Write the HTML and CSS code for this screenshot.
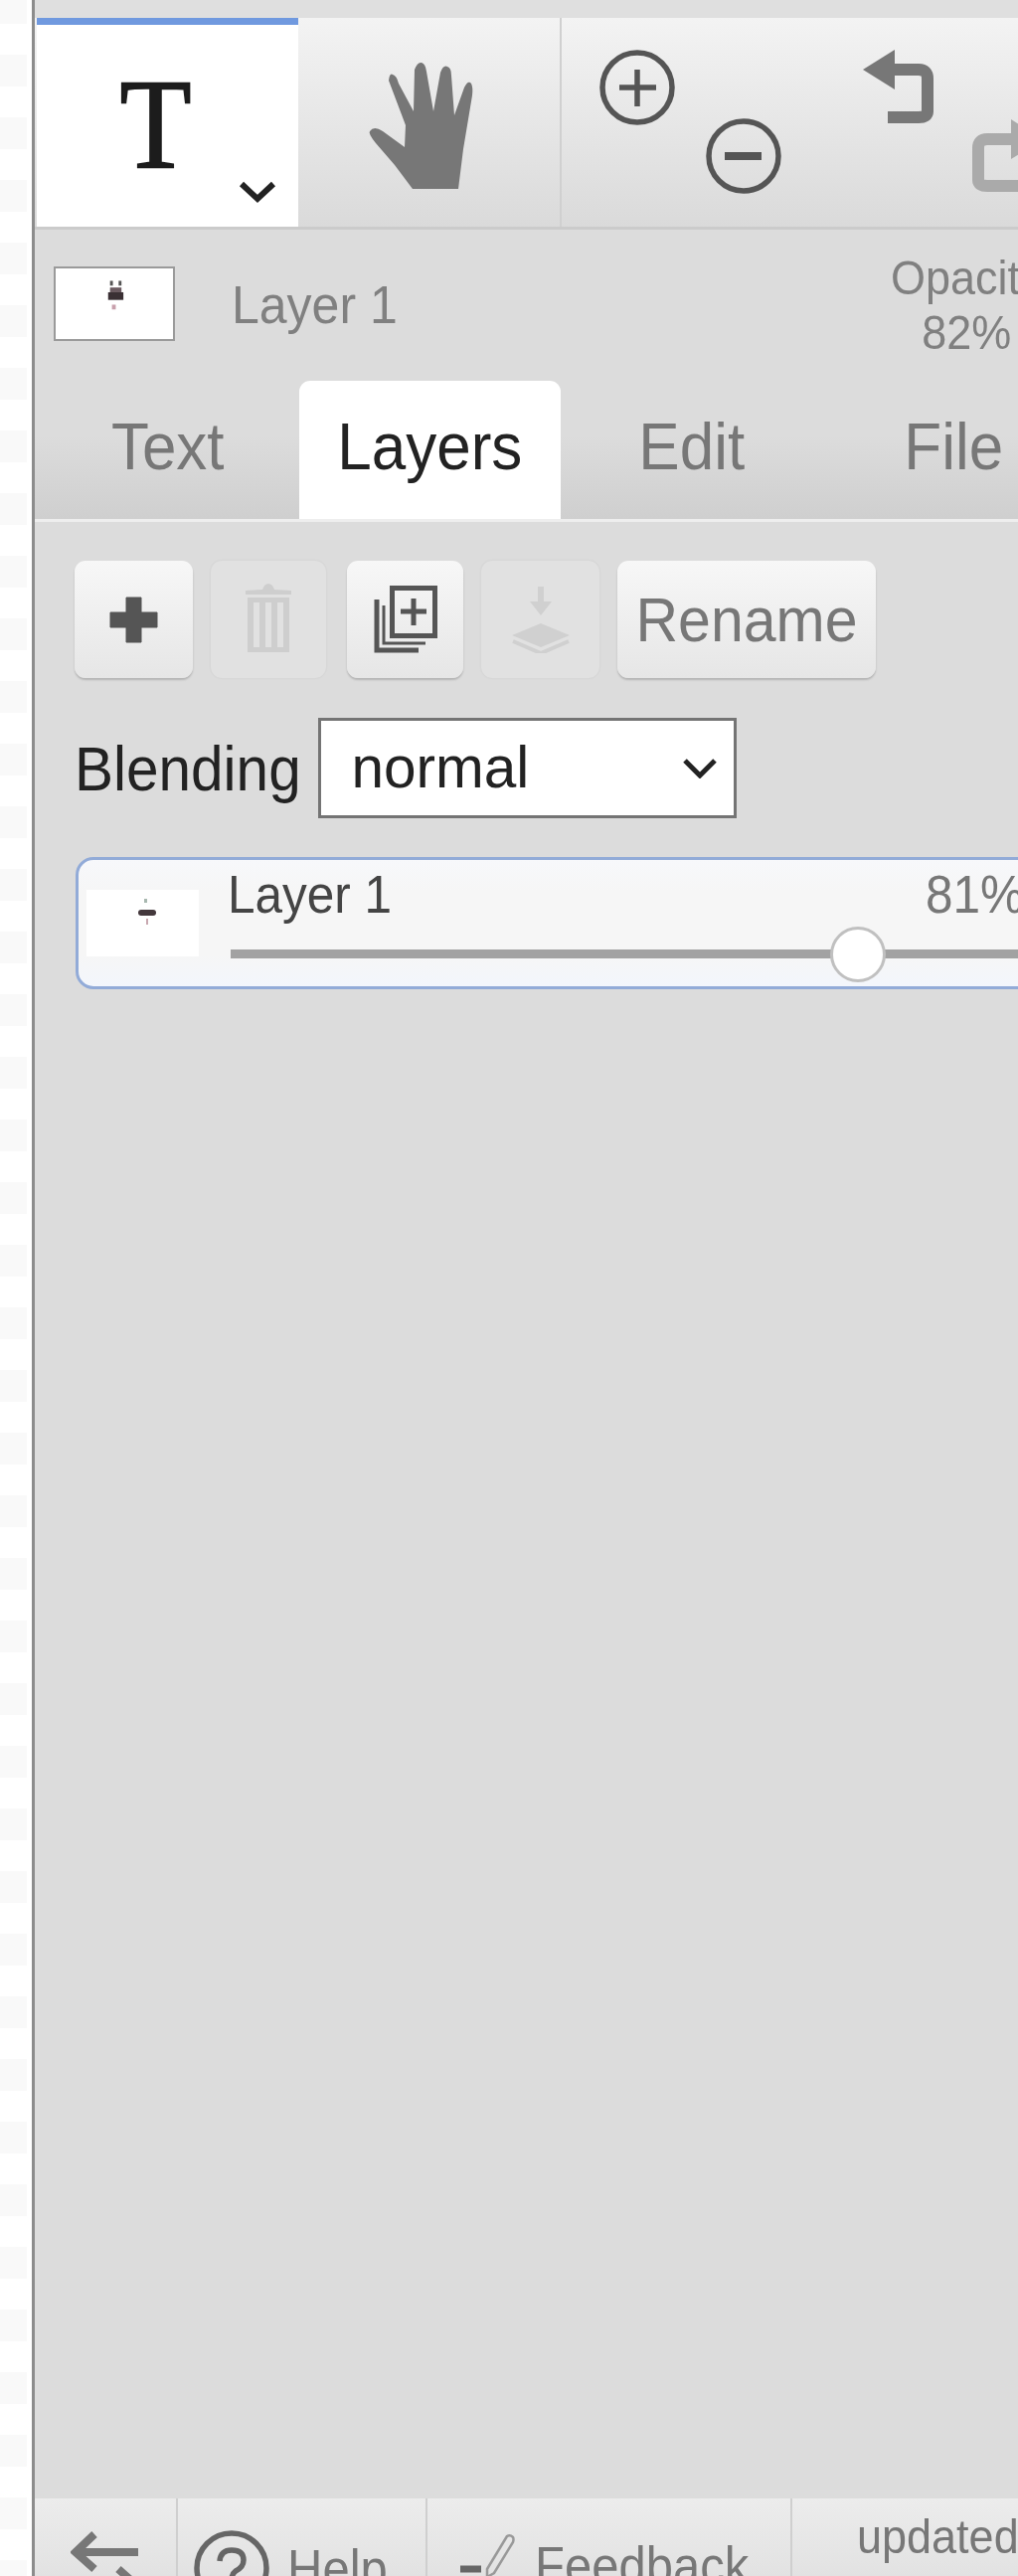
FILE: index.html
```html
<!DOCTYPE html>
<html lang="en">
<head>
<meta charset="utf-8">
<title>Layers</title>
<link rel="stylesheet" href="styles.css">
</head>
<body>
<div class="app">
  <div class="strip"></div>
  <main class="panel">
    <div class="topgap"></div>
    <div class="toolbar">
      <div class="tool tool-active">
        <span class="t-glyph">T</span>
        <svg class="t-chevron" viewBox="0 0 38 24"><path d="M3 4 L19 19 L35 4" fill="none" stroke="#222" stroke-width="6"/></svg>
      </div>
      <div class="tool tool-sep">
        <svg class="tool-svg" viewBox="0 0 263 210"><path fill="#777" d="M115 172 L97 148 L78 126 Q70 116 72 114 Q76 108 85 114 L107 130 L108 108 L91 63 Q92 55 95 57 Q99 58 101 66 L116 94 L117 52 Q120 44 124 45 Q128 46 129 54 L136 94 L143 55 Q146 47 150 49 Q154 50 154 58 L157 98 L167 70 Q171 62 174 66 Q176 70 175 78 L166 132 L161 172 Z"/></svg>
      </div>
      <div class="tool">
        <svg class="tool-svg" viewBox="0 0 263 210"><g fill="none" stroke="#555" stroke-width="5.5"><circle cx="76" cy="70" r="35"/><path d="M58 70H95M76 52V89"/><circle cx="183" cy="139" r="35"/></g><path d="M164 139H201" stroke="#555" stroke-width="8" fill="none"/></svg>
      </div>
      <div class="tool">
        <svg class="tool-svg" viewBox="0 0 263 210"><path d="M65 52H96Q105 52 105 61V94Q105 100 96 100H65" fill="none" stroke="#777" stroke-width="12"/><path d="M40 52L72 32V72Z" fill="#777"/><path d="M195 122H165Q156 122 156 131V163Q156 169 165 169H230" fill="none" stroke="#aaa" stroke-width="12"/><path d="M221 122L189 102V142Z" fill="#aaa"/></svg>
      </div>
    </div>
    <div class="layer-info">
      <div class="thumb-box">
        <svg class="thumb-svg" viewBox="0 0 121 74"><rect x="54" y="25" width="16" height="8" fill="#3a3034"/><rect x="56" y="13" width="3" height="5" fill="#555"/><rect x="65" y="13" width="3" height="5" fill="#555"/><rect x="56" y="20" width="12" height="5" fill="#6a5a60"/><rect x="58" y="38" width="4" height="5" fill="#c8a0ac"/></svg>
      </div>
      <span class="info-name tall">Layer 1</span>
      <div class="opacity tall"><div>Opacity</div><div>82%</div></div>
    </div>
    <nav class="tabs">
      <div class="tab"><span class="tall">Text</span></div>
      <div class="tab tab-active"><span class="tall">Layers</span></div>
      <div class="tab"><span class="tall">Edit</span></div>
      <div class="tab"><span class="tall">File</span></div>
    </nav>
    <section class="content">
      <div class="buttons">
        <button class="btn btn-plus">
          <svg class="ico" viewBox="0 0 49 47"><path d="M17 1H32V16H48V31H32V46H17V31H1V16H17Z" fill="#555" stroke="#555" stroke-width="1" stroke-linejoin="round"/></svg>
        </button>
        <button class="btn btn-trash btn-off">
          <svg class="ico" viewBox="0 0 48 72"><path d="M1 13H47V9L30 8Q28 2 24 2Q20 2 18 8L1 9Z" fill="#cecece"/><path d="M3 16H45V71H3ZM9 21V66H15V21ZM21 21V66H27V21ZM33 21V66H39V21Z" fill="#cecece" fill-rule="evenodd"/></svg>
        </button>
        <button class="btn btn-dup">
          <svg class="ico" viewBox="0 0 64 68"><path d="M3 14V65H45" fill="none" stroke="#555" stroke-width="5"/><path d="M10 20V58H52" fill="none" stroke="#555" stroke-width="3"/><rect x="18.500" y="2.500" width="43" height="48" fill="none" stroke="#555" stroke-width="5"/><path d="M40 13V40M27 26H53" stroke="#555" stroke-width="5" fill="none"/></svg>
        </button>
        <button class="btn btn-merge btn-off">
          <svg class="ico" viewBox="0 0 60 68"><path d="M27 1H33V16H41L30 30L19 16H27Z" fill="#d0d0d0"/><path d="M30 38L59 50L30 62L1 50Z" fill="#d0d0d0"/><path d="M2 56L30 68L58 56" fill="none" stroke="#d0d0d0" stroke-width="4"/></svg>
        </button>
        <button class="btn btn-text"><span class="tall">Rename</span></button>
      </div>
      <div class="blend">
        <label class="blend-label tall" for="blend-mode">Blending</label>
        <div class="select-wrap">
          <select id="blend-mode" class="select"><option>normal</option></select>
          <svg class="select-chevron" viewBox="0 0 34 20"><path d="M2 2L17 17L32 2" fill="none" stroke="#222" stroke-width="5"/></svg>
        </div>
      </div>
      <div class="layer-card">
        <div class="card-thumb">
          <svg class="thumb-svg" viewBox="0 0 113 67"><rect x="52" y="20" width="18" height="6" rx="3" fill="#44383c"/><rect x="58" y="9" width="3" height="4" fill="#a8b8b0"/><rect x="60" y="29" width="2" height="6" fill="#c8a8b0"/></svg>
        </div>
        <div class="card-main">
          <div class="card-head"><span class="card-name tall">Layer 1</span><span class="card-pct tall">81%</span></div>
          <div class="slider"><span class="knob"></span></div>
        </div>
      </div>
    </section>
    <footer class="footer">
      <div class="foot foot-back">
        <svg class="back-svg" viewBox="0 0 70 60"><path d="M4 21H68M24 3L5 21L24 38" fill="none" stroke="#777" stroke-width="8"/><path d="M48 38L66 54" fill="none" stroke="#777" stroke-width="8"/></svg>
      </div>
      <div class="foot foot-help">
        <svg class="help-svg" viewBox="0 0 76 76"><circle cx="38" cy="38" r="35" fill="none" stroke="#666" stroke-width="5.500"/><path d="M26 31Q27 20 38 20Q50 20 50 30Q50 37 42 41Q38 44 38 50" fill="none" stroke="#666" stroke-width="5.500"/><rect x="35" y="55" width="6" height="6" fill="#666"/></svg>
        <span class="foot-text tall">Help</span>
      </div>
      <div class="foot foot-feedback">
        <svg class="pencil-svg" viewBox="0 0 56 46"><path d="M1 36H22" stroke="#666" stroke-width="7" fill="none"/><path d="M28 36L48 3Q51 1 54 4Q55 6 54 9L35 40L28 44Z" fill="none" stroke="#999" stroke-width="2.500"/></svg>
        <span class="foot-text tall">Feedback</span>
      </div>
      <div class="foot foot-updated"><span class="updated tall">updated</span></div>
    </footer>
  </main>
</div>
</body>
</html>
```

FILE: styles.css
```css
* { box-sizing: border-box; }
html, body { margin: 0; padding: 0; }
body {
  width: 1024px;
  height: 2591px;
  overflow: hidden;
  background: #fff;
  font-family: "Liberation Sans", Arial, sans-serif;
}
.tall { display: inline-block; transform: scaleY(1.08); }
.app { display: flex; width: 1024px; height: 2591px; filter: blur(0.7px); }
.strip {
  flex: 0 0 32px;
  background-color: #fff;
  background-image: linear-gradient(to bottom, #f9f9f9 0, #f9f9f9 32px, #fff 32px);
  background-position: 0 55px;
  background-size: 27px 63px;
  background-repeat: repeat-y;
}
.panel {
  flex: 0 0 992px;
  width: 992px;
  height: 2591px;
  border-left: 3px solid #8c8c8c;
  background: #dcdcdc;
  display: flex;
  flex-direction: column;
  overflow: hidden;
}
.topgap { flex: 0 0 18px; background: #dfdfdf; }
.toolbar {
  flex: 0 0 213px;
  display: flex;
  padding-left: 2px;
  border-bottom: 3px solid #cbcbcb;
  background: linear-gradient(to bottom, #f3f3f3, #dadada);
  overflow: hidden;
}
.tool { flex: 0 0 263px; height: 210px; position: relative; }
.tool-sep { border-right: 2px solid #d0d0d0; }
.tool-active { background: #fff; border-top: 7px solid #7099df; text-align: center; }
.tool-svg { display: block; width: 263px; height: 210px; }
.t-glyph {
  position: absolute;
  left: -12px;
  right: 12px;
  top: 41px;
  font-family: "Liberation Serif", serif;
  font-size: 118px;
  line-height: 118px;
  color: #1c1c1c;
  transform: scaleY(1.1);
  -webkit-text-stroke: 1.5px #1c1c1c;
}
.t-chevron { position: absolute; left: 203px; top: 156px; width: 38px; height: 24px; }
.layer-info {
  flex: 0 0 152px;
  display: flex;
  align-items: center;
  padding: 0 0 0 19px;
}
.thumb-box {
  flex: 0 0 122px;
  height: 75px;
  margin-top: -3px;
  background: #fff;
  border: 2px solid #9a9a9a;
}
.thumb-svg { display: block; width: 100%; height: 100%; }
.info-name { flex: 0 0 auto; width: 663px; margin-left: 57px; font-size: 50px; color: #808080; }
.opacity {
  flex: 0 0 152px;
  font-size: 45px;
  line-height: 51px;
  color: #808080;
  text-align: center;
}
.tabs {
  flex: 0 0 142px;
  display: flex;
  padding-left: 2px;
  border-bottom: 3px solid #eeeeee;
  background: linear-gradient(to bottom, #dcdcdc, #dcdcdc 40%, #cfcfcf);
  overflow: hidden;
}
.tab {
  flex: 0 0 263.500px;
  display: flex;
  align-items: center;
  justify-content: center;
  padding-bottom: 9px;
  font-size: 62px;
  color: #777;
  border-radius: 11px 11px 0 0;
}
.tab-active { background: #fff; color: #222; }
.content { flex: 1 1 auto; padding: 39px 0 0 40px; min-height: 0; }
.buttons { display: flex; gap: 18px; align-items: flex-start; }
.btn {
  height: 118px;
  padding: 0;
  border: 0;
  border-radius: 11px;
  background: linear-gradient(to bottom, #f7f7f7, #e6e6e6);
  box-shadow: 0 2px 2px #b4b4b4;
  display: flex;
  align-items: center;
  justify-content: center;
  font-family: inherit;
}
.btn-off { background: #e1e1e1; box-shadow: 0 0 2px #c8c8c8; }
.btn-plus { width: 119px; }
.btn-trash { width: 116px; margin-right: 3px; }
.btn-dup { width: 117px; }
.btn-merge { width: 119px; }
.btn-text { width: 260px; font-size: 59px; color: #777; }
.ico { display: block; }
.btn-plus .ico { width: 49px; height: 47px; }
.btn-trash .ico { width: 48px; height: 72px; margin-top: -4px; }
.btn-dup .ico { width: 64px; height: 68px; }
.btn-merge .ico { width: 60px; height: 68px; }
.blend { display: flex; align-items: center; gap: 19px; margin-top: 40px; }
.blend-label { flex: 0 0 225.500px; min-width: 0; font-size: 58.500px; color: #222; white-space: nowrap; }
.select-wrap { position: relative; width: 421px; height: 101px; }
.select {
  appearance: none;
  display: block;
  width: 100%;
  height: 100%;
  padding: 0 0 2px 31px;
  border: 3px solid #747474;
  border-radius: 0;
  background: #fff;
  font-family: inherit;
  font-size: 58.500px;
  color: #222;
}
.select-chevron { position: absolute; right: 20px; top: 41px; width: 34px; height: 20px; }
.layer-card {
  display: flex;
  width: 1000px;
  height: 133px;
  margin: 39px 0 0 1px;
  border: 3px solid #92abd8;
  border-radius: 18px;
  background: linear-gradient(to bottom, #f7f8fb, #f6f6f6 25%, #f6f6f6 75%, #f3f6fc);
  padding: 0 0 0 8px;
}
.card-thumb { flex: 0 0 113px; height: 67px; margin-top: 30px; background: #fff; }
.card-main { flex: 0 0 801px; margin-left: 29px; }
.card-head {
  display: flex;
  justify-content: space-between;
  height: 90px;
  padding-top: 7px;
  font-size: 49.500px;
  line-height: 58px;
}
.card-name { color: #444; }
.card-pct { color: #777; }
.slider { position: relative; height: 9px; margin: 0 0 0 3px; background: #a2a2a2; }
.knob {
  position: absolute;
  left: 603px;
  top: -23px;
  width: 56px;
  height: 56px;
  border-radius: 50%;
  background: #fff;
  border: 3px solid #c0c0c0;
}
.footer {
  flex: 0 0 78px;
  display: flex;
  padding-left: 1px;
  background: linear-gradient(to bottom, #ececec, #e2e2e2);
  overflow: hidden;
}
.foot { flex: 0 0 auto; height: 130px; position: relative; border-right: 2px solid #cfcfcf; }
.foot-back { width: 143px; }
.foot-help { width: 251px; display: flex; gap: 18px; padding: 32px 0 0 16px; }
.foot-feedback { width: 367px; display: flex; gap: 20px; padding: 35px 0 0 32px; }
.foot-updated { width: 300px; border-right: 0; padding: 11px 0 0 65px; }
.back-svg { position: absolute; left: 35px; top: 33px; width: 70px; height: 60px; }
.help-svg { flex: 0 0 76px; width: 76px; height: 76px; }
.pencil-svg { flex: 0 0 56px; width: 56px; height: 46px; }
.foot-text { font-size: 49px; line-height: 56px; color: #777; margin-top: 12px; }
.foot-feedback .foot-text { margin-top: 6px; }
.updated { font-size: 45px; line-height: 56px; color: #777; }
```
